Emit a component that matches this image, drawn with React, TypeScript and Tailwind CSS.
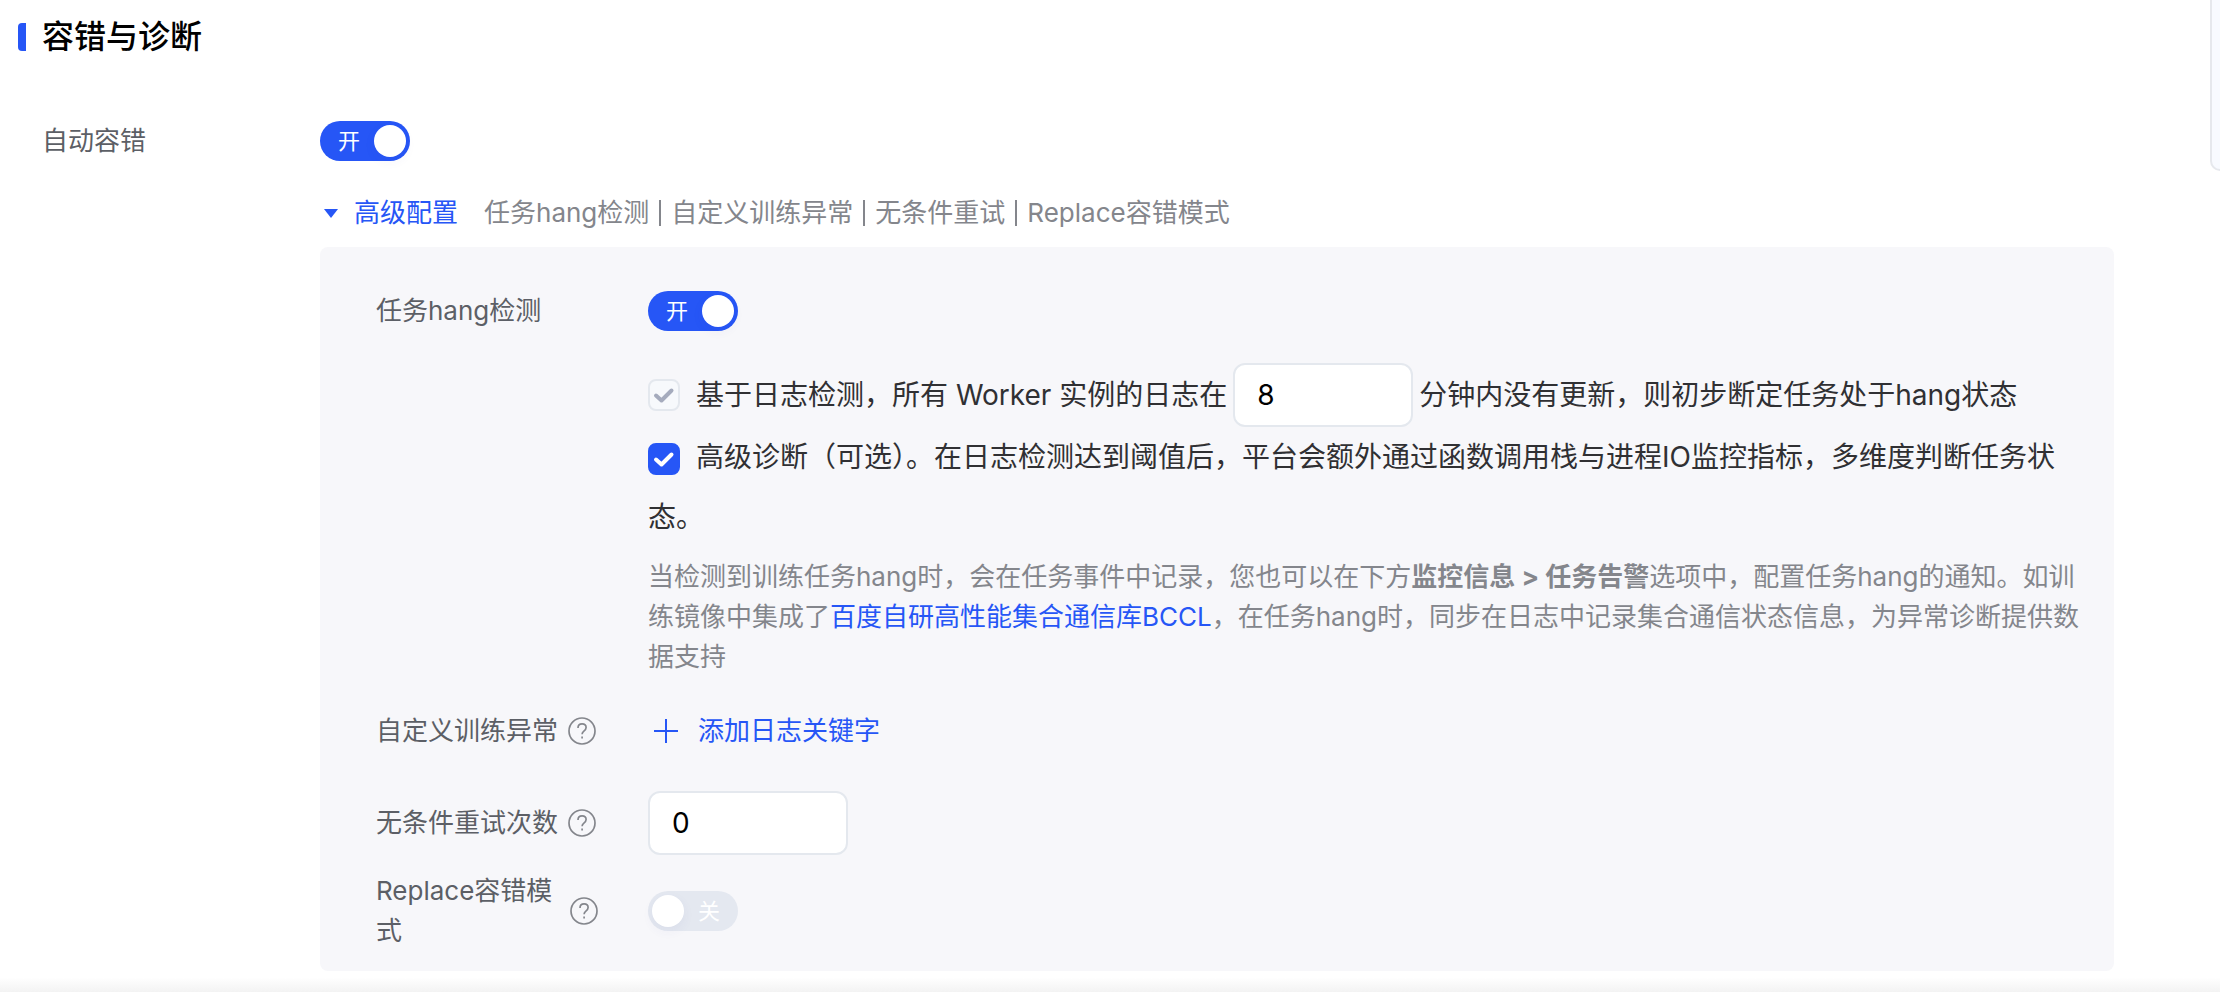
import { useState, type ReactNode } from 'react';

type SwitchProps = {
  id: string;
  checked: boolean;
  onChange?: (value: boolean) => void;
  disabled?: boolean;
};

function Switch({ id, checked, onChange, disabled }: SwitchProps) {
  return (
    <label
      htmlFor={id}
      className={`flex h-10 w-[90px] shrink-0 items-center rounded-full p-1 ${
        checked ? 'bg-[#2656f6]' : 'flex-row-reverse bg-[#e4e8f0]'
      } ${disabled ? 'cursor-not-allowed' : 'cursor-pointer'}`}
    >
      <input
        id={id}
        type="checkbox"
        role="switch"
        className="sr-only"
        checked={checked}
        disabled={disabled}
        onChange={e => onChange?.(e.target.checked)}
      />
      <span className="flex-1 text-center text-[22px] leading-8 text-white">{checked ? '开' : '关'}</span>
      <span className="size-8 rounded-full bg-white shadow-[0_4px_12px_rgba(60,70,160,0.06)]" />
    </label>
  );
}

type CheckboxProps = {
  id: string;
  checked: boolean;
  onChange?: (value: boolean) => void;
  disabled?: boolean;
};

function Checkbox({ id, checked, onChange, disabled }: CheckboxProps) {
  return (
    <span className="relative mr-4 inline-block size-8 align-middle">
      <input
        id={id}
        type="checkbox"
        checked={checked}
        disabled={disabled}
        onChange={e => onChange?.(e.target.checked)}
        className="block size-8 appearance-none rounded-lg border-2 border-[#e4e8ee] bg-white checked:border-[#2656f6] checked:bg-[#2656f6] disabled:border-[#e4e8ee] disabled:bg-[#f7f9fc]"
      />
      {checked && (
        <svg
          viewBox="0 0 32 32"
          fill="none"
          strokeWidth="4"
          strokeLinecap="round"
          strokeLinejoin="round"
          className={`pointer-events-none absolute inset-0 size-8 ${disabled ? 'stroke-[#a5abbd]' : 'stroke-white'}`}
        >
          <path d="M8 16.5 L13.5 21.5 L23.5 11.5" />
        </svg>
      )}
    </span>
  );
}

function HelpButton({ label }: { label: string }) {
  return (
    <button type="button" aria-label={label} className="shrink-0 text-[#84868c]">
      <svg viewBox="0 0 28 28" fill="none" stroke="currentColor" strokeWidth="1.7" className="size-7">
        <circle cx="14" cy="14" r="13" />
        <path d="M10 11 C10 8.4 11.7 6.9 14.1 6.9 C16.5 6.9 18.1 8.4 18.1 10.6 C18.1 12.4 17.1 13.2 15.9 14.1 C14.7 15 14.1 15.6 14.1 17.2" />
        <path d="M14.1 19.6 V21.6" />
      </svg>
    </button>
  );
}

type RowProps = {
  label: string;
  htmlFor?: string;
  help?: string;
  className?: string;
  children: ReactNode;
};

function Row({ label, htmlFor, help, className = '', children }: RowProps) {
  return (
    <div className={`grid grid-cols-[272px_1fr] ${className}`}>
      <div className="flex max-w-[222px] items-center gap-2.5 text-[26px] leading-10 text-[#5c5f66]">
        <label htmlFor={htmlFor}>{label}</label>
        {help && <HelpButton label={help} />}
      </div>
      <div>{children}</div>
    </div>
  );
}

const features = ['任务hang检测', '自定义训练异常', '无条件重试', 'Replace容错模式'];

const inputClass = 'h-16 rounded-xl border-2 border-[#e4e8ee] bg-white px-[22px] text-[28px] text-black outline-none';

export default function App() {
  const [autoRecover, setAutoRecover] = useState(true);
  const [hangCheck, setHangCheck] = useState(true);
  const [diagnose, setDiagnose] = useState(true);
  const [expanded, setExpanded] = useState(true);
  const [minutes, setMinutes] = useState('8');
  const [retries, setRetries] = useState('0');

  return (
    <div
      lang="zh-CN"
      className="flex min-h-screen flex-col bg-white font-['Inter','Noto_Sans_CJK_SC',sans-serif] text-[26px] leading-10"
    >
      <div className="flex flex-1 items-start">
        <main className="min-w-0 flex-1 pt-[17px] pr-24 pl-[18px]">
          <h2 className="flex h-10 items-center gap-4 text-[32px] font-medium text-black">
            <span className="h-7 w-2 rounded-l bg-[#2656f6]" />
            容错与诊断
          </h2>

          <div className="mt-16 grid grid-cols-[278px_1fr] pl-6">
            <label htmlFor="auto-recover" className="text-[#5c5f66]">自动容错</label>
            <div className="min-w-0">
              <Switch id="auto-recover" checked={autoRecover} onChange={setAutoRecover} />

              <div className="mt-8 flex items-center gap-[26px]">
                <button
                  type="button"
                  aria-expanded={expanded}
                  onClick={() => setExpanded(!expanded)}
                  className="flex items-center gap-4 pl-1 text-[#2656f6]"
                >
                  <svg viewBox="0 0 14 9" fill="currentColor" className="h-[9px] w-[14px]">
                    <path d="M0 0 H14 L7 9 Z" />
                  </svg>
                  高级配置
                </button>
                <span className="flex items-center text-[#84868c]">
                  {features.map((name, i) => (
                    <span key={name} className="flex items-center">
                      {i > 0 && <span className="mx-2.5 h-[26px] w-0.5 bg-[#84868c]" />}
                      {name}
                    </span>
                  ))}
                </span>
              </div>

              {expanded && (
                <div className="mt-3.5 rounded-lg bg-[#f7f7fa] pt-11 pr-8 pb-5 pl-14">
                  <Row label="任务hang检测" htmlFor="hang-check" className="items-start">
                    <Switch id="hang-check" checked={hangCheck} onChange={setHangCheck} />
                    <div className="mt-8 pr-1 text-[28px] leading-[60px] text-[#303033]">
                      <div className="flex items-center">
                        <Checkbox id="log-check" checked disabled />
                        <label htmlFor="log-check">基于日志检测，所有 Worker 实例的日志在</label>
                        <input
                          aria-label="分钟"
                          inputMode="numeric"
                          value={minutes}
                          onChange={e => setMinutes(e.target.value)}
                          className={`mx-1.5 w-[180px] ${inputClass}`}
                        />
                        <span>分钟内没有更新，则初步断定任务处于hang状态</span>
                      </div>
                      <div>
                        <Checkbox id="diagnose" checked={diagnose} onChange={setDiagnose} />
                        <label htmlFor="diagnose">
                          高级诊断（可选）。在日志检测达到阈值后，平台会额外通过函数调用栈与进程IO监控指标，多维度判断任务状态。
                        </label>
                      </div>
                    </div>
                    <p className="mt-2.5 text-[#84868c]">
                      当检测到训练任务hang时，会在任务事件中记录，您也可以在下方<b>监控信息 &gt; 任务告警</b>选项中，配置任务hang的通知。如训练镜像中集成了<a href="#bccl" className="text-[#2656f6]">百度自研高性能集合通信库BCCL</a>，在任务hang时，同步在日志中记录集合通信状态信息，为异常诊断提供数据支持
                    </p>
                  </Row>

                  <Row label="自定义训练异常" help="自定义训练异常说明" className="mt-[34px] items-center">
                    <button type="button" className="flex items-center gap-5 pl-1.5 text-[#2656f6]">
                      <svg viewBox="0 0 24 24" stroke="currentColor" strokeWidth="2" className="size-6">
                        <path d="M12 0 V24 M0 12 H24" />
                      </svg>
                      添加日志关键字
                    </button>
                  </Row>

                  <Row label="无条件重试次数" htmlFor="retries" help="无条件重试次数说明" className="mt-10 items-center">
                    <input
                      id="retries"
                      inputMode="numeric"
                      value={retries}
                      onChange={e => setRetries(e.target.value)}
                      className={`block w-[200px] ${inputClass}`}
                    />
                  </Row>

                  <Row label="Replace容错模式" htmlFor="replace-mode" help="Replace容错模式说明" className="mt-4 items-center">
                    <Switch id="replace-mode" checked={false} disabled />
                  </Row>
                </div>
              )}
            </div>
          </div>
        </main>

        {/* Edge of the side card */}
        <aside className="h-[171px] w-2.5 rounded-bl-2xl border-b-2 border-l-2 border-[#e6e8ed] bg-[#f8faff]" />
      </div>

      {/* Shadow of the footer bar */}
      <div className="h-[21px] bg-linear-to-b from-white from-30% to-[#f3f3f3]" />
    </div>
  );
}
